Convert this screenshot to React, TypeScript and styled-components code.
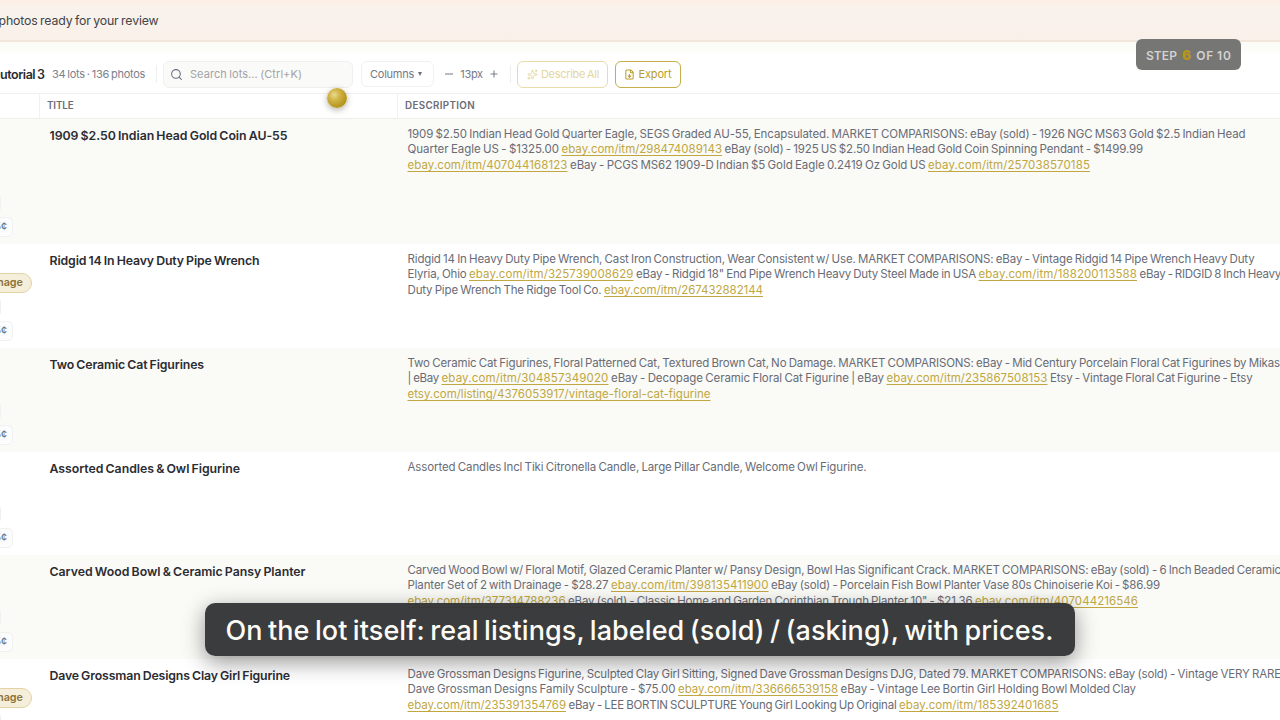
import React, { useLayoutEffect, useRef } from "react";
import styled, { createGlobalStyle, css } from "styled-components";
import { Search, Sparkles, FileDown } from "lucide-react";

const GlobalStyle = createGlobalStyle`
  *, *::before, *::after { box-sizing: border-box; }
  html, body { margin: 0; padding: 0; background: #fff; overflow: hidden; }
  body { font-family: Inter, "Liberation Sans", sans-serif; }
`;

const FitBox = styled.span<{ $w: number }>`
  display: inline-block;
  flex: none;
  width: ${(p) => p.$w}px;
  white-space: nowrap;
  word-spacing: -0.07em;
`;

/* Tracks its text so that it fills the given measure. */
function Fit({ w, children }: { w: number; children: string }) {
  const ref = useRef<HTMLSpanElement>(null);
  useLayoutEffect(() => {
    const el = ref.current;
    if (!el) return;
    el.style.letterSpacing = "0px";
    const natural = el.getBoundingClientRect().width;
    el.style.letterSpacing = `${(w - natural) / children.length}px`;
  }, [w, children]);
  return (
    <FitBox $w={w}>
      <span ref={ref}>{children}</span>
    </FitBox>
  );
}

const Page = styled.div`
  position: relative;
  display: flex;
  flex-direction: column;
  width: 1280px;
  height: 720px;
  overflow: hidden;
  background: #fff;
`;

const Banner = styled.div`
  flex: none;
  display: flex;
  align-items: center;
  height: 42px;
  background: linear-gradient(#fdeee6 0, #fdeee6 3px, #f8f2eb 6px, #f7f2eb 20px, #faf1eb 28px, #faf0ea 100%);
  border-bottom: 2px solid #f1e6d9;
  color: #444346;
  font-size: 12.3px;
`;

const BannerText = styled.div`
  margin-left: -1.5px;
`;

const Toolbar = styled.div`
  flex: none;
  display: flex;
  align-items: center;
  height: 52px;
  padding-top: 13px;
  background: linear-gradient(#fbfbf7 0, #fcfcf9 8px, #fff 14px);
  border-bottom: 1px solid #f0f0f1;
  color: #7c808b;
  font-size: 11px;
`;

const SheetName = styled.div`
  width: 52px;
  color: #2b2c32;
  font-size: 12.5px;
  font-weight: 600;
`;

const Counts = styled.div`
  width: 104px;
`;

const Divider = styled.div`
  width: 1px;
  height: 18px;
  background: #efeff0;
`;

const SearchField = styled.div`
  display: flex;
  align-items: center;
  gap: 7px;
  width: 190px;
  height: 27px;
  margin: 0 8px 0 6px;
  padding-left: 6px;
  border: 1px solid #f0f0ee;
  border-radius: 6px;
  background: #fafaf8;
  color: #a2a3a5;
  svg { color: #6c7180; flex: none; }
`;

const ColumnsButton = styled.div`
  display: flex;
  align-items: center;
  width: 73px;
  height: 26px;
  padding-left: 8px;
  border: 1px solid #f1f1f2;
  border-radius: 6px;
  color: #757985;
`;

const Caret = styled.span`
  margin-left: 3.5px;
  border: 2.4px solid transparent;
  border-top: 4px solid #6c707d;
  border-bottom: 0;
`;

const SizeStepper = styled.div`
  display: flex;
  align-items: center;
  justify-content: space-between;
  width: 53px;
  margin: 0 12px 0 11px;
  color: #777b86;
`;

const StepGlyph = styled.svg`
  width: 8px;
  height: 8px;
  flex: none;
  stroke: #7d818c;
  stroke-width: 1.1;
`;

const Actions = styled.div`
  display: flex;
  gap: 6.5px;
  margin-left: 6px;
`;

const GoldButton = styled.div<{ $w: number; $faded?: boolean }>`
  display: flex;
  align-items: center;
  gap: 3.5px;
  width: ${(p) => p.$w}px;
  height: 27px;
  padding-left: 8.5px;
  border: 1px solid #c6ae48;
  border-radius: 6px;
  color: #b99d2b;
  ${(p) =>
    p.$faded &&
    css`
      border-color: #e8dcab;
      color: #e4d69c;
    `}
  svg { flex: none; }
`;

const gridColumns = css`
  display: grid;
  grid-template-columns: 39px 358px 1fr;
`;

const HeaderRow = styled.div`
  ${gridColumns}
  flex: none;
  height: 25px;
  border-bottom: 1px solid #eeeeec;
  background: #fff;
`;

const HeaderCell = styled.div`
  display: flex;
  align-items: center;
  padding-left: 7px;
  border-left: 1px solid #f1f1f1;
  color: #6a6c76;
  font-size: 9.8px;
  font-weight: 600;
  line-height: 22px;
  &:first-child { border-left: 0; }
`;

const LotRow = styled.div<{ $h: number; $tinted: boolean }>`
  ${gridColumns}
  flex: none;
  height: ${(p) => p.$h}px;
  background: ${(p) => (p.$tinted ? "#fafaf7" : "#ffffff")};
`;

const StatusCell = styled.div`
  display: flex;
  flex-direction: column;
  align-items: flex-end;
  justify-content: flex-end;
  gap: 4px;
  padding: 0 7px 7px 0;
`;

const DamageTag = styled.div`
  flex: none;
  height: 20px;
  padding: 0 8px;
  border: 1px solid #e2d3a4;
  border-radius: 10px;
  background: #f5eedb;
  color: #8b7339;
  font-size: 10.8px;
  font-weight: 600;
  line-height: 18px;
`;

const Chip = styled.div<{ $right: number }>`
  flex: none;
  height: 20px;
  min-width: 34px;
  margin-right: ${(p) => p.$right}px;
  padding: 0 5px;
  border: 1px solid #f1f1f2;
  border-radius: 5px;
  background: #fcfcfd;
  color: #73767f;
  font-size: 10.5px;
  font-weight: 500;
  line-height: 18px;
  text-align: right;
`;

const TitleCell = styled.div`
  padding: 7.5px 0 0 10.5px;
  color: #2b2c32;
  font-size: 12.3px;
  font-weight: 600;
  line-height: 18px;
  white-space: nowrap;
`;

const DescriptionCell = styled.div`
  padding: 7.5px 0 0 10.5px;
  color: #696c76;
  font-size: 11.5px;
`;

const Line = styled.div`
  display: flex;
  gap: 2.5px;
  height: 15.7px;
  line-height: 15.7px;
`;

const Link = styled.span`
  color: #c0a742;
  span span {
    text-decoration: underline;
    text-decoration-thickness: 1px;
    text-underline-offset: 1.5px;
    text-decoration-skip-ink: none;
  }
`;

const StepBadge = styled.div`
  position: absolute;
  left: 1136px;
  top: 39px;
  display: flex;
  align-items: center;
  gap: 5px;
  width: 105px;
  height: 30.5px;
  padding: 2px 0 0 10px;
  border-radius: 6px;
  background: #767674;
  color: #d2d2d2;
  font-size: 12px;
  font-weight: 600;
`;

const StepNumber = styled.b`
  color: #b5951c;
  font-size: 13.5px;
`;

const Pointer = styled.div`
  position: absolute;
  left: 327px;
  top: 88px;
  width: 20px;
  height: 20px;
  border-radius: 50%;
  background: radial-gradient(circle at 36% 34%, #ecd990 0, #d3b74b 28%, #b99a24 62%, #a88a15 100%);
  box-shadow: 0 2px 6px rgba(60, 50, 20, 0.38);
`;

const Caption = styled.div`
  position: absolute;
  left: 205px;
  top: 603px;
  width: 869.5px;
  height: 53px;
  padding-left: 20.5px;
  border-radius: 10px;
  background: rgba(51, 53, 54, 0.965);
  box-shadow: 0 6px 22px rgba(0, 0, 0, 0.42);
  color: #fdfbf5;
  font-size: 27px;
  font-weight: 500;
  line-height: 56px;
`;

type Segment = { text: string; w: number; link?: boolean };
type Lot = { title: string; titleW: number; h: number; damage?: boolean; lines: Segment[][] };

const t = (text: string, w: number): Segment => ({ text, w });
const a = (text: string, w: number): Segment => ({ text, w, link: true });

const lots: Lot[] = [
  {
    title: "1909 $2.50 Indian Head Gold Coin AU-55",
    titleW: 238,
    h: 125,
    lines: [
      [t("1909 $2.50 Indian Head Gold Quarter Eagle, SEGS Graded AU-55, Encapsulated. MARKET COMPARISONS: eBay (sold) - 1926 NGC MS63 Gold $2.5 Indian Head", 838)],
      [t("Quarter Eagle US - $1325.00", 151.5), a("ebay.com/itm/298474089143", 160.5), t("eBay (sold) - 1925 US $2.50 Indian Head Gold Coin Spinning Pendant - $1499.99", 418.5)],
      [a("ebay.com/itm/407044168123", 160), t("eBay - PCGS MS62 1909-D Indian $5 Gold Eagle 0.2419 Oz Gold US", 355.5), a("ebay.com/itm/257038570185", 162)],
    ],
  },
  {
    title: "Ridgid 14 In Heavy Duty Pipe Wrench",
    titleW: 210,
    h: 104,
    damage: true,
    lines: [
      [t("Ridgid 14 In Heavy Duty Pipe Wrench, Cast Iron Construction, Wear Consistent w/ Use. MARKET COMPARISONS: eBay - Vintage Ridgid 14 Pipe Wrench Heavy Duty", 847)],
      [t("Elyria, Ohio", 59), a("ebay.com/itm/325739008629", 164.5), t("eBay - Ridgid 18\" End Pipe Wrench Heavy Duty Steel Made in USA", 340), a("ebay.com/itm/188200113588", 158.5), t("eBay - RIDGID 8 Inch Heavy", 141.5)],
      [t("Duty Pipe Wrench The Ridge Tool Co.", 194), a("ebay.com/itm/267432882144", 159)],
    ],
  },
  {
    title: "Two Ceramic Cat Figurines",
    titleW: 154.5,
    h: 104,
    lines: [
      [t("Two Ceramic Cat Figurines, Floral Patterned Cat, Textured Brown Cat, No Damage. MARKET COMPARISONS: eBay - Mid Century Porcelain Floral Cat Figurines by Mikas", 872.5)],
      [t("| eBay", 31.5), a("ebay.com/itm/304857349020", 167), t("eBay - Decopage Ceramic Floral Cat Figurine | eBay", 273), a("ebay.com/itm/235867508153", 161), t("Etsy - Vintage Floral Cat Figurine - Etsy", 202.5)],
      [a("etsy.com/listing/4376053917/vintage-floral-cat-figurine", 303)],
    ],
  },
  {
    title: "Assorted Candles & Owl Figurine",
    titleW: 190.5,
    h: 103,
    lines: [[t("Assorted Candles Incl Tiki Citronella Candle, Large Pillar Candle, Welcome Owl Figurine.", 459)]],
  },
  {
    title: "Carved Wood Bowl & Ceramic Pansy Planter",
    titleW: 256,
    h: 104,
    lines: [
      [t("Carved Wood Bowl w/ Floral Motif, Glazed Ceramic Planter w/ Pansy Design, Bowl Has Significant Crack. MARKET COMPARISONS: eBay (sold) - 6 Inch Beaded Ceramic", 873.5)],
      [t("Planter Set of 2 with Drainage - $28.27", 201), a("ebay.com/itm/398135411900", 157.5), t("eBay (sold) - Porcelain Fish Bowl Planter Vase 80s Chinoiserie Koi - $86.99", 389)],
      [a("ebay.com/itm/377314788236", 158), t("eBay (sold) - Classic Home and Garden Corinthian Trough Planter 10\" - $21.36", 404.5), a("ebay.com/itm/407044216546", 163)],
    ],
  },
  {
    title: "Dave Grossman Designs Clay Girl Figurine",
    titleW: 240.5,
    h: 104,
    damage: true,
    lines: [
      [t("Dave Grossman Designs Figurine, Sculpted Clay Girl Sitting, Signed Dave Grossman Designs DJG, Dated 79. MARKET COMPARISONS: eBay (sold) - Vintage VERY RARE", 873.5)],
      [t("Dave Grossman Designs Family Sculpture - $75.00", 268), a("ebay.com/itm/336666539158", 160), t("eBay - Vintage Lee Bortin Girl Holding Bowl Molded Clay", 295.5)],
      [a("ebay.com/itm/235391354769", 158.5), t("eBay - LEE BORTIN SCULPTURE Young Girl Looking Up Original", 328), a("ebay.com/itm/185392401685", 159.5)],
    ],
  },
];

export default function App() {
  return (
    <>
      <GlobalStyle />
      <Page>
        <Banner>
          <BannerText><Fit w={160}>photos ready for your review</Fit></BannerText>
        </Banner>
        <Toolbar>
          <SheetName><Fit w={44.5}>utorial 3</Fit></SheetName>
          <Counts><Fit w={93}>34 lots · 136 photos</Fit></Counts>
          <Divider />
          <SearchField>
            <Search size={13} strokeWidth={2} />
            <Fit w={112}>Search lots... (Ctrl+K)</Fit>
          </SearchField>
          <ColumnsButton>
            <Fit w={44}>Columns</Fit>
            <Caret />
          </ColumnsButton>
          <SizeStepper>
            <StepGlyph viewBox="0 0 8 8"><path d="M0 4h8" /></StepGlyph>
            <Fit w={22.5}>13px</Fit>
            <StepGlyph viewBox="0 0 8 8"><path d="M0.5 4h7M4 0.5v7" /></StepGlyph>
          </SizeStepper>
          <Divider />
          <Actions>
            <GoldButton $w={91} $faded>
              <Sparkles size={11} strokeWidth={2} />
              <Fit w={58}>Describe All</Fit>
            </GoldButton>
            <GoldButton $w={66}>
              <FileDown size={11} strokeWidth={2.2} />
              <Fit w={33}>Export</Fit>
            </GoldButton>
          </Actions>
        </Toolbar>
        <HeaderRow>
          <HeaderCell />
          <HeaderCell><Fit w={26.5}>TITLE</Fit></HeaderCell>
          <HeaderCell><Fit w={70}>DESCRIPTION</Fit></HeaderCell>
        </HeaderRow>
        {lots.map((lot, i) => (
          <LotRow key={lot.title} $h={lot.h} $tinted={i % 2 === 0}>
            <StatusCell>
              {lot.damage && <DamageTag>Damage</DamageTag>}
              <Chip $right={31} />
              <Chip $right={19}>5¢</Chip>
            </StatusCell>
            <TitleCell><Fit w={lot.titleW}>{lot.title}</Fit></TitleCell>
            <DescriptionCell>
              {lot.lines.map((line, j) => (
                <Line key={j}>
                  {line.map((s) =>
                    s.link ? (
                      <Link key={s.text}><Fit w={s.w}>{s.text}</Fit></Link>
                    ) : (
                      <Fit key={s.text} w={s.w}>{s.text}</Fit>
                    )
                  )}
                </Line>
              ))}
            </DescriptionCell>
          </LotRow>
        ))}
        <Pointer />
        <StepBadge>
          <Fit w={31}>STEP</Fit>
          <StepNumber>6</StepNumber>
          <Fit w={35.5}>OF 10</Fit>
        </StepBadge>
        <Caption>
          <Fit w={828}>On the lot itself: real listings, labeled (sold) / (asking), with prices.</Fit>
        </Caption>
      </Page>
    </>
  );
}
